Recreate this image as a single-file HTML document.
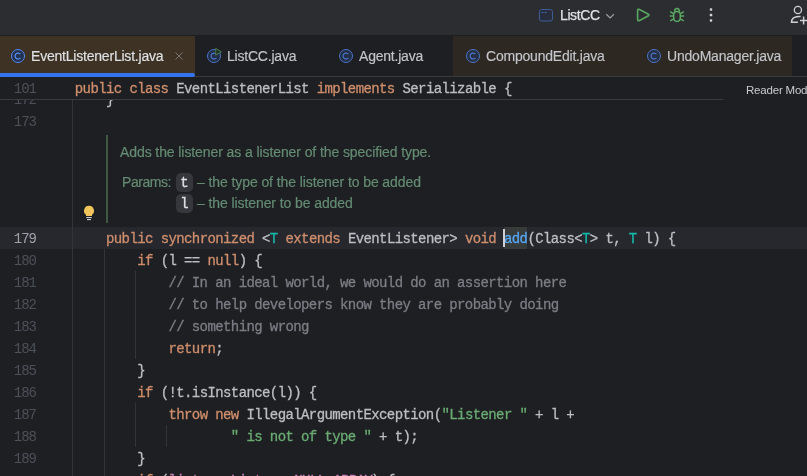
<!DOCTYPE html>
<html><head><meta charset="utf-8">
<style>
html,body{margin:0;padding:0;background:#1e1f22;}
body{width:807px;height:476px;overflow:hidden;position:relative;font-family:"Liberation Sans",sans-serif;font-size:13px;color:#dfe1e5;}
#top{position:absolute;left:0;top:0;width:807px;height:35px;background:#2b2d30;}
#tabs{position:absolute;left:0;top:36px;width:807px;height:40px;background:#1e1f22;}
#tabline{position:absolute;left:0;top:76px;width:807px;height:1px;background:#393b40;}
.tab{position:absolute;top:0;height:40px;}
.tab.brown{background:#3d3223;}
.tab.inact.brown{background:#2d2822;}
.tab.inact svg{opacity:0.78;overflow:visible;}
.tab.inact .lbl{color:#c3c5ca;}
.tab .lbl{-webkit-text-stroke:0.15px;}
.tab .lbl{position:absolute;top:11.5px;letter-spacing:-0.21px;font-size:14px;color:#dfe1e5;white-space:nowrap;line-height:16px;}
.tab svg{position:absolute;top:12px;}
#underline{position:absolute;left:0;top:73px;width:195px;height:4px;background:#3574f0;border-radius:0 2px 2px 0;}
#sticky{position:absolute;left:0;top:77px;width:723px;height:22px;border-bottom:1px solid #393b40;}
.code{font-family:"Liberation Mono",monospace;font-size:14px;letter-spacing:-0.6px;white-space:pre;color:#bcbec4;-webkit-text-stroke:0.3px;}
.ln{position:absolute;left:0;width:36px;padding-top:1px;text-align:right;font-family:"Liberation Mono",monospace;font-size:14px;letter-spacing:-1px;color:#4b5059;line-height:22px;height:22px;}
.cl{position:absolute;left:74.8px;padding-top:1px;line-height:22px;height:22px;}
.k{color:#cf8e6d}.t{color:#16baac}.s{color:#6aab73}.c{color:#7a7e85}
#gutterline{position:absolute;left:72px;top:100px;width:1px;height:376px;background:#313438;}
#curline{position:absolute;left:0;top:227px;width:807px;height:22px;background:#26282e;}
.doc{position:absolute;-webkit-text-stroke:0.2px;color:#648b73;font-size:14px;letter-spacing:-0.09px;white-space:nowrap;line-height:16px;}
.pbox{position:absolute;left:176px;width:17px;height:19px;border-radius:5px;background:#35373c;color:#dfe1e5;font-family:"Liberation Mono",monospace;font-size:14px;text-align:center;line-height:20.5px;-webkit-text-stroke:0.3px;overflow:hidden;}
.ig{position:absolute;width:1px;background:#313438;}
</style></head><body><div id="wrap" style="position:absolute;left:0;top:0;width:807px;height:476px;will-change:transform;">
<div id="top">
<svg style="position:absolute;left:538px;top:8px" width="16" height="16" viewBox="0 0 16 16"><rect x="1.5" y="1.5" width="13" height="11.5" rx="2" fill="#272d3c" stroke="#3f5c95"/><rect x="3.5" y="4" width="2" height="1" fill="#456aae"/><rect x="6.5" y="4" width="2" height="1" fill="#456aae"/></svg>
<div style="position:absolute;left:560px;top:7px;font-size:14px;line-height:16px;color:#dfe1e5;letter-spacing:-0.4px;-webkit-text-stroke:0.25px #dfe1e5;">ListCC</div>
<svg style="position:absolute;left:604px;top:10px" width="12" height="12" viewBox="0 0 12 12"><path d="M2.3 4.3 L6.1 8 L9.9 4.3" fill="none" stroke="#9da0a8" stroke-width="1.2"/></svg>
<svg style="position:absolute;left:635px;top:7px" width="16" height="16" viewBox="0 0 16 16"><path d="M2.6 3.7 Q2.6 1.5 4.5 2.5 L13 7 Q14.8 8 13 9 L4.5 13.5 Q2.6 14.5 2.6 12.3 Z" fill="none" stroke="#5aa762" stroke-width="1.6" stroke-linejoin="round"/></svg>
<svg style="position:absolute;left:669px;top:7px" width="16" height="16" viewBox="0 0 16 16"><rect x="4.7" y="4.6" width="6.6" height="9.8" rx="3.3" fill="none" stroke="#5aa762" stroke-width="1.5"/><path d="M5.6 4.5 A2.4 3 0 0 1 10.4 4.5 M0.8 9 H4.6 M11.4 9 H15.2 M1.2 4.6 L4.7 6.9 M14.8 4.6 L11.3 6.9 M1.2 13.8 L4.7 11.8 M14.8 13.8 L11.3 11.8" fill="none" stroke="#5aa762" stroke-width="1.5"/></svg>
<svg style="position:absolute;left:703px;top:7px" width="16" height="16" viewBox="0 0 16 16"><rect x="6.75" y="1.25" width="2.5" height="2.5" rx="0.7" fill="#ced0d6"/><rect x="6.75" y="6.85" width="2.5" height="2.5" rx="0.7" fill="#ced0d6"/><rect x="6.75" y="12.25" width="2.5" height="2.5" rx="0.7" fill="#ced0d6"/></svg>
<svg style="position:absolute;left:788px;top:4px" width="20" height="26" viewBox="0 0 20 26"><circle cx="9.9" cy="5.95" r="3.6" fill="none" stroke="#ced0d6" stroke-width="1.3"/><path d="M12.6 12.4 C7.2 12.2 3.5 13.8 3.5 18.2 H9.9 M12 16.5 H20 M15.6 12.6 V20.6" fill="none" stroke="#ced0d6" stroke-width="1.5"/></svg>
</div>
<div id="tabs">
<div class="tab brown" style="left:0;width:195px;"><svg style="left:10px" width="16" height="16" viewBox="0 0 16 16"><circle cx="8" cy="8" r="6.5" fill="#25324d" stroke="#548af7"/><path d="M10.4 6.2 A2.95 2.95 0 1 0 10.4 9.8" fill="none" stroke="#548af7" stroke-width="1.25"/></svg><div class="lbl" style="left:31px">EventListenerList.java</div>
<svg style="left:173px;top:14px" width="12" height="12" viewBox="0 0 12 12"><path d="M2.5 2.5 L9.5 9.5 M9.5 2.5 L2.5 9.5" stroke="#77766f" stroke-width="1" fill="none"/></svg></div>
<div class="tab inact" style="left:195px;width:130px;"><svg style="left:11px" width="16" height="16" viewBox="0 0 16 16"><circle cx="8" cy="8" r="6.5" fill="#25324d" stroke="#548af7"/><path d="M10.4 6.2 A2.95 2.95 0 1 0 10.4 9.8" fill="none" stroke="#548af7" stroke-width="1.25"/><path d="M9.7 0.4 L15.4 3.8 L9.7 7.2 Z" fill="#253627" stroke="#57965c" stroke-linejoin="round"/></svg><div class="lbl" style="left:32px">ListCC.java</div></div>
<div class="tab inact" style="left:326px;width:126px;"><svg style="left:12px" width="16" height="16" viewBox="0 0 16 16"><circle cx="8" cy="8" r="6.5" fill="#25324d" stroke="#548af7"/><path d="M10.4 6.2 A2.95 2.95 0 1 0 10.4 9.8" fill="none" stroke="#548af7" stroke-width="1.25"/></svg><div class="lbl" style="left:33px">Agent.java</div></div>
<div class="tab inact brown" style="left:453px;width:179px;"><svg style="left:12px" width="16" height="16" viewBox="0 0 16 16"><circle cx="8" cy="8" r="6.5" fill="#25324d" stroke="#548af7"/><path d="M10.4 6.2 A2.95 2.95 0 1 0 10.4 9.8" fill="none" stroke="#548af7" stroke-width="1.25"/></svg><div class="lbl" style="left:33px">CompoundEdit.java</div></div>
<div class="tab inact brown" style="left:632px;width:160px;"><svg style="left:14px" width="16" height="16" viewBox="0 0 16 16"><circle cx="8" cy="8" r="6.5" fill="#25324d" stroke="#548af7"/><path d="M10.4 6.2 A2.95 2.95 0 1 0 10.4 9.8" fill="none" stroke="#548af7" stroke-width="1.25"/></svg><div class="lbl" style="left:35px">UndoManager.java</div></div>
</div>
<div id="tabline"></div>
<div id="underline"></div>

<div id="curline"></div>
<div id="gutterline"></div>
<div style="position:absolute;left:504px;top:227px;width:23px;height:22px;background:#373b39"></div>

<div class="ln" style="top:88px">172</div><div class="cl code" style="top:88px">    }</div>
<div class="ln" style="top:110px">173</div>

<div id="sticky" style="background:#1e1f22"><div class="ln" style="top:0">101</div><div class="cl code" style="top:0"><span class="k">public class</span> EventListenerList <span class="k">implements</span> Serializable {</div></div>
<div style="position:absolute;left:746px;top:81.5px;font-size:11.5px;line-height:16px;color:#c8cacf;white-space:nowrap;letter-spacing:-0.2px">Reader Mode</div>

<div style="position:absolute;left:106px;top:135px;width:2px;height:88px;background:#3e5843;"></div>
<div class="doc" style="left:120px;top:144px">Adds the listener as a listener of the specified type.</div>
<div class="doc" style="left:122px;top:174px;letter-spacing:-0.45px">Params:</div>
<div class="pbox" style="top:173px">t</div><div class="doc" style="left:197px;top:174px">– the type of the listener to be added</div>
<div class="pbox" style="top:194px">l</div><div class="doc" style="left:197px;top:195px">– the listener to be added</div>
<svg style="position:absolute;left:81px;top:205px" width="16" height="16" viewBox="0 0 16 16"><path d="M8 0.8 A5 5 0 0 0 5 9.8 V11 H11 V9.8 A5 5 0 0 0 8 0.8 Z" fill="#f2c55c"/><rect x="5.3" y="12" width="5.4" height="1.1" fill="#ced0d6"/><rect x="6" y="14" width="4" height="1.1" fill="#ced0d6"/></svg>

<div class="ln" style="top:227px;color:#a1a3ab">179</div><div class="cl code" style="top:227px">    <span class="k">public synchronized</span> &lt;<span class="t">T</span> <span class="k">extends</span> EventListener&gt; <span class="k">void</span> <span style="color:#56a8f5">add</span>(Class&lt;<span class="t">T</span>&gt; t, <span class="t">T</span> l) {</div>
<div style="position:absolute;left:503px;top:229px;width:2px;height:18px;background:#ced0d6"></div>
<div class="ln" style="top:249px">180</div><div class="cl code" style="top:249px">        <span class="k">if</span> (l == <span class="k">null</span>) {</div>
<div class="ln" style="top:271px">181</div><div class="cl code c" style="top:271px">            // In an ideal world, we would do an assertion here</div>
<div class="ln" style="top:293px">182</div><div class="cl code c" style="top:293px">            // to help developers know they are probably doing</div>
<div class="ln" style="top:315px">183</div><div class="cl code c" style="top:315px">            // something wrong</div>
<div class="ln" style="top:337px">184</div><div class="cl code" style="top:337px">            <span class="k">return</span>;</div>
<div class="ln" style="top:359px">185</div><div class="cl code" style="top:359px">        }</div>
<div class="ln" style="top:381px">186</div><div class="cl code" style="top:381px">        <span class="k">if</span> (!t.isInstance(l)) {</div>
<div class="ln" style="top:403px">187</div><div class="cl code" style="top:403px">            <span class="k">throw new</span> IllegalArgumentException(<span class="s">"Listener "</span> + l +</div>
<div class="ln" style="top:425px">188</div><div class="cl code" style="top:425px">                    <span class="s">" is not of type "</span> + t);</div>
<div class="ln" style="top:447px">189</div><div class="cl code" style="top:447px">        }</div>
<div class="ln" style="top:471px">190</div><div class="cl code" style="top:469px">        <span class="k">if</span> (<span style="color:#c77dbb">listenerList</span> == <span style="color:#c77dbb;font-style:italic">NULL_ARRAY</span>) {</div>

<div class="ig" style="left:104px;top:249px;height:227px"></div>
<div class="ig" style="left:135px;top:271px;height:88px"></div>
<div class="ig" style="left:135px;top:403px;height:44px"></div>
<div class="ig" style="left:166px;top:425px;height:22px"></div>
</div></body></html>
